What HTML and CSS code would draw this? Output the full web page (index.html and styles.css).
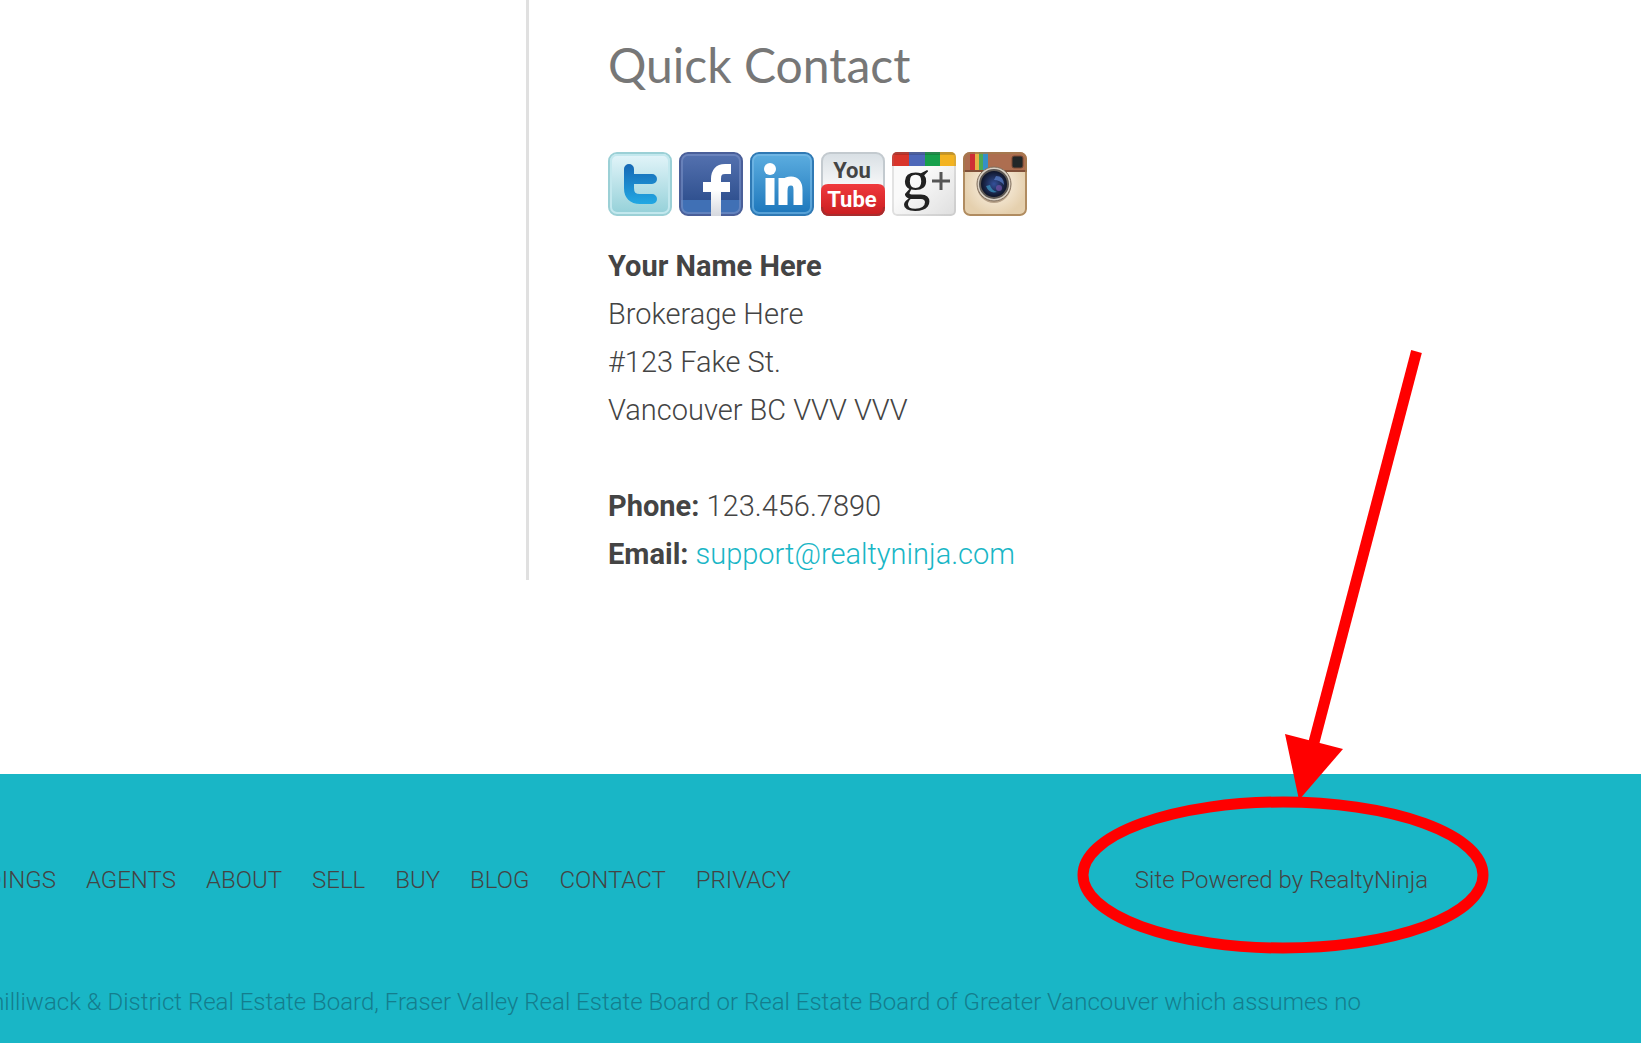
FILE: index.html
```
<!DOCTYPE html>
<html lang="en">
<head>
    <meta charset="UTF-8">
    <meta name="viewport" content="width=device-width, initial-scale=1.0">
    <title>Quick Contact</title>
    <link rel="stylesheet" href="styles.css">
</head>
<body>
    <main class="content">
        <section class="contact">
            <h2>Quick Contact</h2>

            <div class="social">
                <a href="#" aria-label="Twitter">
                    <svg viewBox="0 0 64 64">
                        <defs>
                            <linearGradient id="twBg" x2="0" y2="1"><stop offset="0" stop-color="#e4f5fa"/><stop offset="1" stop-color="#93d0d8"/></linearGradient>
                            <linearGradient id="twT" gradientUnits="userSpaceOnUse" x1="0" y1="12" x2="0" y2="52"><stop offset="0" stop-color="#1668b5"/><stop offset="1" stop-color="#22a8e3"/></linearGradient>
                        </defs>
                        <rect x="1" y="1" width="62" height="62" rx="8" fill="url(#twBg)" stroke="#9bd0d6" stroke-width="2"/>
                        <rect x="3" y="3" width="58" height="58" rx="6" fill="none" stroke="#c3e8ee" stroke-width="2"/>
                        <path d="M21 17V36Q21 47 32 47H44M21 27H44" fill="none" stroke="url(#twT)" stroke-width="10" stroke-linecap="round"/>
                    </svg>
                </a>
                <a href="#" aria-label="Facebook">
                    <svg viewBox="0 0 64 64">
                        <defs>
                            <linearGradient id="fbBg" x2="0" y2="1"><stop offset="0" stop-color="#5572b0"/><stop offset="1" stop-color="#254786"/></linearGradient>
                            <linearGradient id="fbF" gradientUnits="userSpaceOnUse" x1="0" y1="12" x2="0" y2="64"><stop offset="0.5" stop-color="#fff"/><stop offset="1" stop-color="#d5d8df"/></linearGradient>
                        </defs>
                        <rect x="1" y="1" width="62" height="62" rx="8" fill="url(#fbBg)"/>
                        <path d="M2 48H62V55Q62 62 55 62H9Q2 62 2 55Z" fill="#4070b5"/>
                        <rect x="1" y="1" width="62" height="62" rx="8" fill="none" stroke="#4a5f99" stroke-width="2"/>
                        <rect x="3" y="3" width="58" height="58" rx="6" fill="none" stroke="#7990c5" stroke-opacity="0.6" stroke-width="2"/>
                        <path d="M37 64V27Q37 17 46 17H52M24 35H51" fill="none" stroke="url(#fbF)" stroke-width="10"/>
                    </svg>
                </a>
                <a href="#" aria-label="LinkedIn">
                    <svg viewBox="0 0 64 64">
                        <defs>
                            <linearGradient id="liBg" x2="0" y2="1"><stop offset="0" stop-color="#5daee0"/><stop offset="1" stop-color="#1c76bb"/></linearGradient>
                        </defs>
                        <rect x="1" y="1" width="62" height="62" rx="8" fill="url(#liBg)" stroke="#2f79b4" stroke-width="2"/>
                        <rect x="3" y="3" width="58" height="58" rx="6" fill="none" stroke="#7dbde8" stroke-opacity="0.6" stroke-width="2"/>
                        <circle cx="20" cy="17" r="6" fill="#fff"/>
                        <path d="M20 26V53M33 53V26M33 39Q33 29 41 29Q48 29 48 38V53" fill="none" stroke="#fff" stroke-width="9"/>
                    </svg>
                </a>
                <a href="#" aria-label="YouTube">
                    <svg viewBox="0 0 64 64">
                        <defs>
                            <linearGradient id="ytBg" x2="0" y2="1"><stop offset="0" stop-color="#d8dfe4"/><stop offset="0.5" stop-color="#f5f6f7"/></linearGradient>
                            <linearGradient id="ytRed" x2="0" y2="1"><stop offset="0" stop-color="#f03a3d"/><stop offset="1" stop-color="#c91d20"/></linearGradient>
                        </defs>
                        <rect x="1" y="1" width="62" height="62" rx="8" fill="url(#ytBg)" stroke="#c3cacf" stroke-width="2"/>
                        <path d="M0 39Q0 32 7 32H57Q64 32 64 39V55Q64 64 55 64H9Q0 64 0 55Z" fill="url(#ytRed)"/>
                        <path d="M1 55Q1 63 9 63H55Q63 63 63 55" fill="none" stroke="#a82c2d" stroke-width="2"/>
                        <text class="tube" x="31" y="26" fill="#444">You</text>
                        <text class="tube" x="31" y="55" fill="#fff">Tube</text>
                    </svg>
                </a>
                <a href="#" aria-label="Google Plus">
                    <svg viewBox="0 0 64 64">
                        <defs>
                            <linearGradient id="gpBg" x2="1" y2="1"><stop offset="0.4" stop-color="#fafafa"/><stop offset="1" stop-color="#dedede"/></linearGradient>
                            <clipPath id="gpClip"><rect width="64" height="64" rx="5"/></clipPath>
                        </defs>
                        <g clip-path="url(#gpClip)">
                            <rect width="64" height="64" fill="url(#gpBg)"/>
                            <rect width="17" height="14" fill="#d9352b"/>
                            <rect x="17" width="16" height="14" fill="#4d67b8"/>
                            <rect x="33" width="15" height="14" fill="#17a04b"/>
                            <rect x="48" width="16" height="14" fill="#f3b321"/>
                            <rect width="64" height="3" fill="#000" fill-opacity="0.15"/>
                            <rect x="1" y="1" width="62" height="62" rx="4" fill="none" stroke="#888" stroke-opacity="0.2" stroke-width="2"/>
                        </g>
                        <text class="plus-g" x="24" y="47">g</text>
                        <path d="M49 20V38M40 29H58" stroke="#555" stroke-width="3"/>
                    </svg>
                </a>
                <a href="#" aria-label="Instagram">
                    <svg viewBox="0 0 64 64">
                        <defs>
                            <radialGradient id="igBg"><stop offset="0.3" stop-color="#f7ecdb"/><stop offset="1" stop-color="#e5d0ae"/></radialGradient>
                            <radialGradient id="igLens"><stop offset="0" stop-color="#34509a"/><stop offset="0.5" stop-color="#20305c"/><stop offset="1" stop-color="#0c1020"/></radialGradient>
                            <clipPath id="igClip"><rect width="64" height="64" rx="7"/></clipPath>
                        </defs>
                        <g clip-path="url(#igClip)">
                            <rect width="64" height="64" fill="url(#igBg)"/>
                            <rect width="64" height="19" fill="#ad6e50"/>
                            <rect y="18" width="64" height="2" fill="#805039"/>
                            <rect x="7" width="5" height="18" fill="#ce2c35"/>
                            <rect x="12" width="4" height="18" fill="#e6b146"/>
                            <rect x="16" width="4" height="18" fill="#4ca954"/>
                            <rect x="20" width="5" height="18" fill="#358fc8"/>
                            <rect x="1" y="1" width="62" height="62" rx="6" fill="none" stroke="#a27b4e" stroke-opacity="0.8" stroke-width="2"/>
                        </g>
                        <rect x="49" y="4" width="11" height="12" rx="2" fill="#222728" stroke="#7a4a35"/>
                        <circle cx="31" cy="34" r="17" fill="#806349" fill-opacity="0.5"/>
                        <circle cx="31" cy="32" r="17" fill="#d8d0c4" stroke="#7f6d5b" stroke-width="1"/>
                        <circle cx="31" cy="32" r="14" fill="url(#igLens)" stroke="#5c5753" stroke-width="2"/>
                        <path d="M33 24Q41 24 41 33Q37 28 31 28Z" fill="#5579c0" fill-opacity="0.8"/>
                        <path d="M23 34Q26 42 34 40Q28 38 27 33Z" fill="#3c9ac5" fill-opacity="0.7"/>
                        <circle cx="36" cy="36" r="3" fill="#6a4fa0" fill-opacity="0.8"/>
                    </svg>
                </a>
            </div>

            <address>
                <strong>Your Name Here</strong><br>
                Brokerage Here<br>
                #123 Fake St.<br>
                Vancouver BC VVV VVV<br>
                <br>
                <strong>Phone:</strong> 123.456.7890<br>
                <strong>Email:</strong> <a href="mailto:support@realtyninja.com">support@realtyninja.com</a>
            </address>
        </section>
    </main>

    <footer class="footer">
        <div class="footer-row">
            <nav class="footer-nav">
                <a href="#">DINGS</a>
                <a href="#">AGENTS</a>
                <a href="#">ABOUT</a>
                <a href="#">SELL</a>
                <a href="#">BUY</a>
                <a href="#">BLOG</a>
                <a href="#">CONTACT</a>
                <a href="#">PRIVACY</a>
            </nav>
            <div class="powered">
                <a href="#">Site Powered by RealtyNinja</a>
                <!-- arrow and circle around the credit link -->
                <svg class="marker" viewBox="0 0 420 610" aria-hidden="true">
                    <path d="M343.5 1.5L240 396" fill="none" stroke="#f00" stroke-width="11"/>
                    <path d="M212 384L270 399L226 450Z" fill="#f00"/>
                    <ellipse cx="210" cy="525" rx="200" ry="73" fill="none" stroke="#f00" stroke-width="11"/>
                </svg>
            </div>
        </div>
        <p class="disclaimer">hilliwack &amp; District Real Estate Board, Fraser Valley Real Estate Board or Real Estate Board of Greater Vancouver which assumes no</p>
    </footer>
</body>
</html>
```
FILE: styles.css
```
body {
    font-family: Roboto, sans-serif;
    font-weight: 300;
    margin: 0;
    min-height: 100vh;
    display: flex;
    flex-direction: column;
    background-color: #fff;
    color: #444;
    overflow: hidden;
}
a {
    color: inherit;
    text-decoration: none;
}
.content {
    padding: 0 0 194px 526px;
}
.contact {
    border-left: 3px solid #e0e0e0;
    padding: 35px 0 2px 79px;
}
h2 {
    font-family: Lato, sans-serif;
    font-size: 48px;
    font-weight: 400;
    line-height: 60px;
    margin: 0 0 57px;
    color: #777;
}
.social {
    display: flex;
    gap: 7px;
    margin-bottom: 26px;
}
.social svg {
    display: block;
    width: 64px;
    height: 64px;
}
.tube {
    font-family: Roboto, sans-serif;
    font-size: 22px;
    font-weight: 700;
    text-anchor: middle;
}
.plus-g {
    font-family: "Liberation Serif", serif;
    font-size: 58px;
    font-weight: 400;
    text-anchor: middle;
    fill: #222;
}
address {
    font-size: 29px;
    font-style: normal;
    line-height: 48px;
}
address strong {
    font-weight: 700;
}
address a {
    color: #19b6c6;
}
.footer {
    flex: 1;
    background-color: #19b6c6;
    padding-top: 88px;
    font-size: 24px;
    line-height: 36px;
}
.footer-row {
    display: flex;
    justify-content: space-between;
    padding-right: 213px;
}
.footer-nav {
    display: flex;
    justify-content: flex-end;
    gap: 30px;
    width: 791px;
}
.powered {
    position: relative;
    white-space: nowrap;
}
.marker {
    position: absolute;
    right: -65px;
    bottom: -62px;
    width: 420px;
    height: 610px;
    pointer-events: none;
}
.disclaimer {
    margin: 86px 280px 0 0;
    display: flex;
    justify-content: flex-end;
    white-space: nowrap;
    color: #147d8d;
}
```
